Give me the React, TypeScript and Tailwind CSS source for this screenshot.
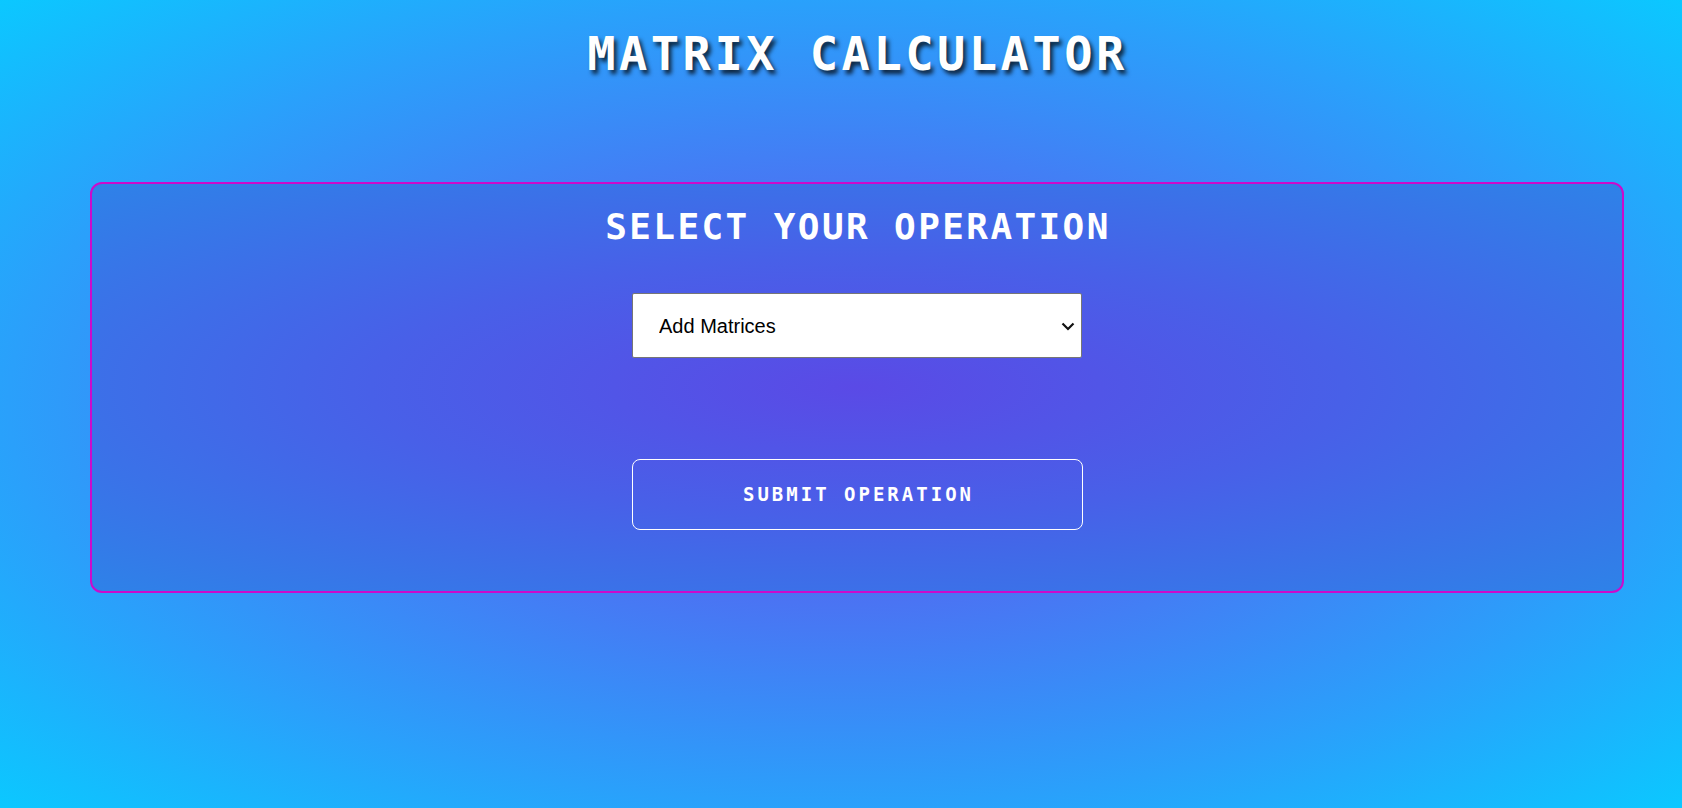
import React from "react";

const App = () => {
	return (
		<div className="h-[808px] overflow-hidden bg-[radial-gradient(ellipse_at_center,#5a4ce7_0%,#4a74f3_35%,#2aa0fb_70%,#0bc8ff_100%)] font-['DejaVu_Sans_Mono',monospace]">
			<h1 className="pt-[30px] pl-[33px] text-center text-[47px] leading-[47px] font-bold tracking-[3.5px] text-white [text-shadow:3px_4px_4px_rgba(0,0,0,0.75)]">
				MATRIX CALCULATOR
			</h1>
			<div className="ml-[90px] mt-[105px] w-[1534px] h-[411px] rounded-xl border-2 border-[#cc0acc] bg-[radial-gradient(ellipse_at_center,#5a4ae6_0%,#4860e8_45%,#2e82e8_100%)] flex flex-col items-center">
				<h2 className="mt-[25px] pl-[2px] text-[36px] leading-[36px] font-bold tracking-[2.4px] text-white">
					SELECT YOUR OPERATION
				</h2>
				<div className="relative mt-[48px] w-[450px] h-[65px]">
					<select
						defaultValue="add"
						className="appearance-none w-full h-full bg-white text-black border border-[#767676] rounded-[2px] pl-[26px] pr-[40px] text-[20px] font-['Liberation_Sans',Arial,sans-serif]"
					>
						<option value="add">Add Matrices</option>
						<option value="sub">Subtract Matrices</option>
						<option value="mul">Multiply Matrices</option>
					</select>
					<svg
						className="pointer-events-none absolute right-[7px] top-[29px]"
						width="14"
						height="9"
						viewBox="0 0 14 9"
						fill="none"
					>
						<path d="M1.5 1.5 L7 7 L12.5 1.5" stroke="#111" strokeWidth="2.2" />
					</svg>
				</div>
				<button className="mt-[101px] w-[451px] h-[71px] pl-[3px] rounded-lg border border-white text-white text-[19px] font-bold tracking-[3px]">
					SUBMIT OPERATION
				</button>
			</div>
		</div>
	);
};

export default App;
